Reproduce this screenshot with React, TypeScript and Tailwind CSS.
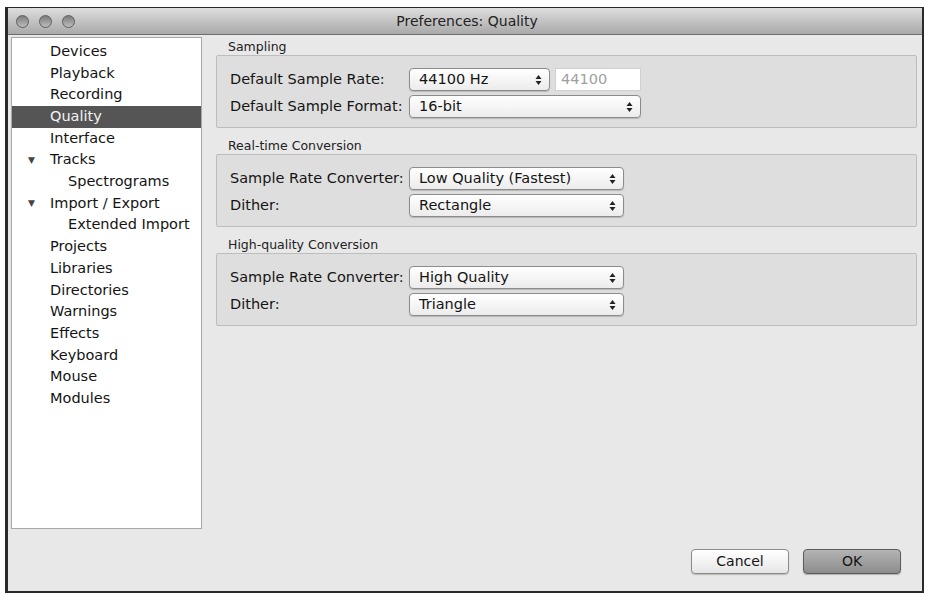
import React from "react";

const sidebarItems: { label: string; level: number; arrow?: boolean; active?: boolean }[] = [
  { label: "Devices", level: 0 },
  { label: "Playback", level: 0 },
  { label: "Recording", level: 0 },
  { label: "Quality", level: 0, active: true },
  { label: "Interface", level: 0 },
  { label: "Tracks", level: 0, arrow: true },
  { label: "Spectrograms", level: 1 },
  { label: "Import / Export", level: 0, arrow: true },
  { label: "Extended Import", level: 1 },
  { label: "Projects", level: 0 },
  { label: "Libraries", level: 0 },
  { label: "Directories", level: 0 },
  { label: "Warnings", level: 0 },
  { label: "Effects", level: 0 },
  { label: "Keyboard", level: 0 },
  { label: "Mouse", level: 0 },
  { label: "Modules", level: 0 },
];

const UpDown = () => (
  <svg width="7" height="12" viewBox="0 0 7 12" className="shrink-0">
    <path d="M3.5 1 L6.5 5 L0.5 5 Z" fill="#222" />
    <path d="M3.5 11 L6.5 7 L0.5 7 Z" fill="#222" />
  </svg>
);

const Select = ({ value, width }: { value: string; width: string }) => (
  <div
    className={`${width} h-[23px] flex items-center justify-between pl-[9px] pr-[7px] rounded-[4px] border border-[#8c8c8c] bg-gradient-to-b from-white to-[#ececec] shadow-[0_1px_1px_rgba(0,0,0,0.18)] text-[14.5px] text-[#141414]`}
  >
    <span>{value}</span>
    <UpDown />
  </div>
);

const Row = ({ label, children }: { label: string; children: React.ReactNode }) => (
  <div className="flex items-center h-[23px]">
    <div className="w-[179px] text-[14.5px] text-[#141414] whitespace-nowrap">{label}</div>
    {children}
  </div>
);

const Group = ({ title, children, first }: { title: string; children: React.ReactNode; first?: boolean }) => (
  <div className={first ? "" : "mt-[10px]"}>
    <div className="h-[16px] leading-[16px] pl-[12px] text-[12.5px] text-[#222]">{title}</div>
    <div className="flex flex-col gap-[4px] pt-[12px] pb-[9px] pl-[13px] border border-[#bdbdbd] rounded-[2px] bg-[#dedede]">
      {children}
    </div>
  </div>
);

const Light = () => (
  <div className="w-[13px] h-[13px] rounded-full border border-[#5e5e5e] bg-gradient-to-b from-[#7c7c7c] to-[#bdbdbd]" />
);

export default function App() {
  return (
    <div className="w-[929px] h-[595px] bg-white pt-[7px] pl-[5px] font-['DejaVu_Sans',sans-serif]">
      <div className="w-[919px] h-[586px] flex flex-col bg-[#e8e8e8] border-solid border-[#2a2a2a] border-t border-l-[3px] border-r-[2px] border-b-2">
        {/* title bar */}
        <div className="relative h-[27px] shrink-0 flex items-center gap-[10px] pl-[8px] border-b border-[#6e6e6e] bg-gradient-to-b from-[#dedede] to-[#a9a9a9]">
          <Light />
          <Light />
          <Light />
          <div className="absolute inset-0 flex items-center justify-center pl-[4px] text-[14px] text-[#222]">
            Preferences: Quality
          </div>
        </div>

        <div className="flex flex-col flex-1">
          <div className="flex pt-[2px] pl-[3px]">
            {/* sidebar */}
            <div className="w-[191px] h-[492px] shrink-0 bg-white border border-[#a8a8a8] pt-[3px]">
              {sidebarItems.map((it) => (
                <div
                  key={it.label}
                  className={`relative h-[21.7px] flex items-center text-[14.5px] whitespace-nowrap ${
                    it.active ? "bg-[#555555] text-[#f2f2f2]" : "text-[#141414]"
                  } ${it.level === 1 ? "pl-[56px]" : "pl-[38px]"}`}
                >
                  {it.arrow && <span className="absolute left-[16px] text-[9px] text-[#444]">▼</span>}
                  {it.label}
                </div>
              ))}
            </div>

            {/* settings */}
            <div className="ml-[14px] w-[701px] pt-[2px]">
              <Group title="Sampling" first>
                <Row label="Default Sample Rate:">
                  <Select value="44100 Hz" width="w-[141px]" />
                  <div className="ml-[5px] w-[86px] h-[23px] flex items-center pl-[5px] bg-white border border-[#d0d0d0] text-[14.5px] text-[#a0a0a0]">
                    44100
                  </div>
                </Row>
                <Row label="Default Sample Format:">
                  <Select value="16-bit" width="w-[232px]" />
                </Row>
              </Group>

              <Group title="Real-time Conversion">
                <Row label="Sample Rate Converter:">
                  <Select value="Low Quality (Fastest)" width="w-[215px]" />
                </Row>
                <Row label="Dither:">
                  <Select value="Rectangle" width="w-[215px]" />
                </Row>
              </Group>

              <Group title="High-quality Conversion">
                <Row label="Sample Rate Converter:">
                  <Select value="High Quality" width="w-[215px]" />
                </Row>
                <Row label="Dither:">
                  <Select value="Triangle" width="w-[215px]" />
                </Row>
              </Group>
            </div>
          </div>

          {/* buttons */}
          <div className="flex justify-end gap-[14px] pt-[20px] pr-[21px]">
            <button className="w-[98px] h-[25px] rounded-[4px] border border-[#8a8a8a] bg-gradient-to-b from-white to-[#e6e6e6] shadow-[0_1px_1px_rgba(0,0,0,0.2)] text-[14px] text-[#141414]">
              Cancel
            </button>
            <button className="w-[98px] h-[25px] rounded-[4px] border border-[#5c5c5c] bg-gradient-to-b from-[#b4b4b4] to-[#8c8c8c] shadow-[0_1px_1px_rgba(0,0,0,0.25)] text-[14px] text-[#141414]">
              OK
            </button>
          </div>
        </div>
      </div>
    </div>
  );
}
